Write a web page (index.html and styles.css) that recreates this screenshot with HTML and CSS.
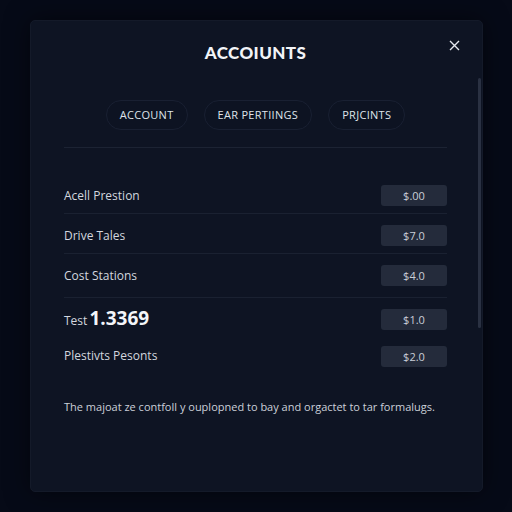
FILE: index.html
```html
<!DOCTYPE html>
<html lang="en">
<head>
  <meta charset="UTF-8" />
  <title>Accounts</title>
  <link rel="stylesheet" href="styles.css">
</head>
<body>
  <div class="modal">
    <button class="close" aria-label="Close">
      <svg width="11" height="11" viewBox="0 0 11 11"><path d="M1 1L10 10M10 1L1 10" stroke="#e4e7ee" stroke-width="1.4" fill="none"/></svg>
    </button>
    <div class="scrollbar"></div>

    <h2 class="title">ACCOIUNTS</h2>

    <div class="tabs">
      <span class="tab">ACCOUNT</span>
      <span class="tab">EAR PERTIINGS</span>
      <span class="tab">PRJCINTS</span>
    </div>

    <div class="divider"></div>

    <div class="rows">
      <div class="row"><span class="label">Acell Prestion</span><span class="value">$.00</span></div>
      <div class="row"><span class="label">Drive Tales</span><span class="value">$7.0</span></div>
      <div class="row tall"><span class="label">Cost Stations</span><span class="value">$4.0</span></div>
      <div class="row plain big-row"><span class="label">Test <strong class="big">1.3369</strong></span><span class="value">$1.0</span></div>
      <div class="row plain last"><span class="label">Plestivts Pesonts</span><span class="value">$2.0</span></div>
    </div>

    <p class="note">The majoat ze contfoll y ouplopned to bay and orgactet to tar formalugs.</p>
  </div>
</body>
</html>
```

FILE: styles.css
```css
* { box-sizing: border-box; }
body {
  margin: 0;
  background: #060a17;
  font-family: "Open Sans", "Liberation Sans", sans-serif;
  color: #d5d9e1;
  padding: 20px 29px 20px 30px;
}
.modal {
  position: relative;
  height: 472px;
  background: #0e1423;
  border: 1px solid #141a29;
  border-radius: 5px;
  padding: 22px 35px 0 33px;
  box-shadow: 0 0 24px rgba(0, 0, 0, 0.5);
}
.close {
  position: absolute; top: 18px; right: 22px;
  background: none; border: none; padding: 0; cursor: pointer;
}
.scrollbar {
  position: absolute; top: 57px; right: 1px;
  width: 3px; height: 250px; border-radius: 2px;
  background: #2a3142;
}
.title {
  margin: 0; text-align: center;
  font-family: "Lato", "Open Sans", sans-serif;
  font-size: 17px; line-height: 20px; font-weight: 900;
  color: #f2f4f8; letter-spacing: 0.4px;
}
.tabs {
  display: flex; justify-content: center; gap: 16px;
  margin-top: 37px;
}
.tab {
  height: 30px; line-height: 28px; padding: 0 13px;
  border: 1px solid #192032; border-radius: 15px;
  font-size: 11px; color: #dfe3ea; letter-spacing: 0.3px;
  background: #0d1322;
}
.divider {
  height: 1px; background: #1c2333; margin-top: 17px;
}
.rows { margin-top: 26px; }
.row {
  display: flex; justify-content: space-between; align-items: center;
  padding: 11px 0 7px; border-bottom: 1px solid #1a2131;
}
.row.tall { padding-bottom: 11px; }
.row.plain { border-bottom: none; padding-bottom: 3px; }
.row.plain .label { line-height: 22px; }
.row.big-row { padding-top: 9px; }
.row.last { padding-top: 8px; }
.row.last .label { line-height: 26px; }
.label { font-size: 12px; color: #d3d7df; }
.big {
  font-size: 19px; font-weight: 700; color: #f3f5f9; margin-left: -1px;
}
.value {
  width: 66px; height: 21px; line-height: 21px; text-align: center;
  background: #242b3b; border-radius: 3px;
  font-size: 11px; color: #c9ced8;
}
.note {
  margin: 28px 0 0; font-size: 11px; line-height: 14px; color: #cbd0d9;
}
```
